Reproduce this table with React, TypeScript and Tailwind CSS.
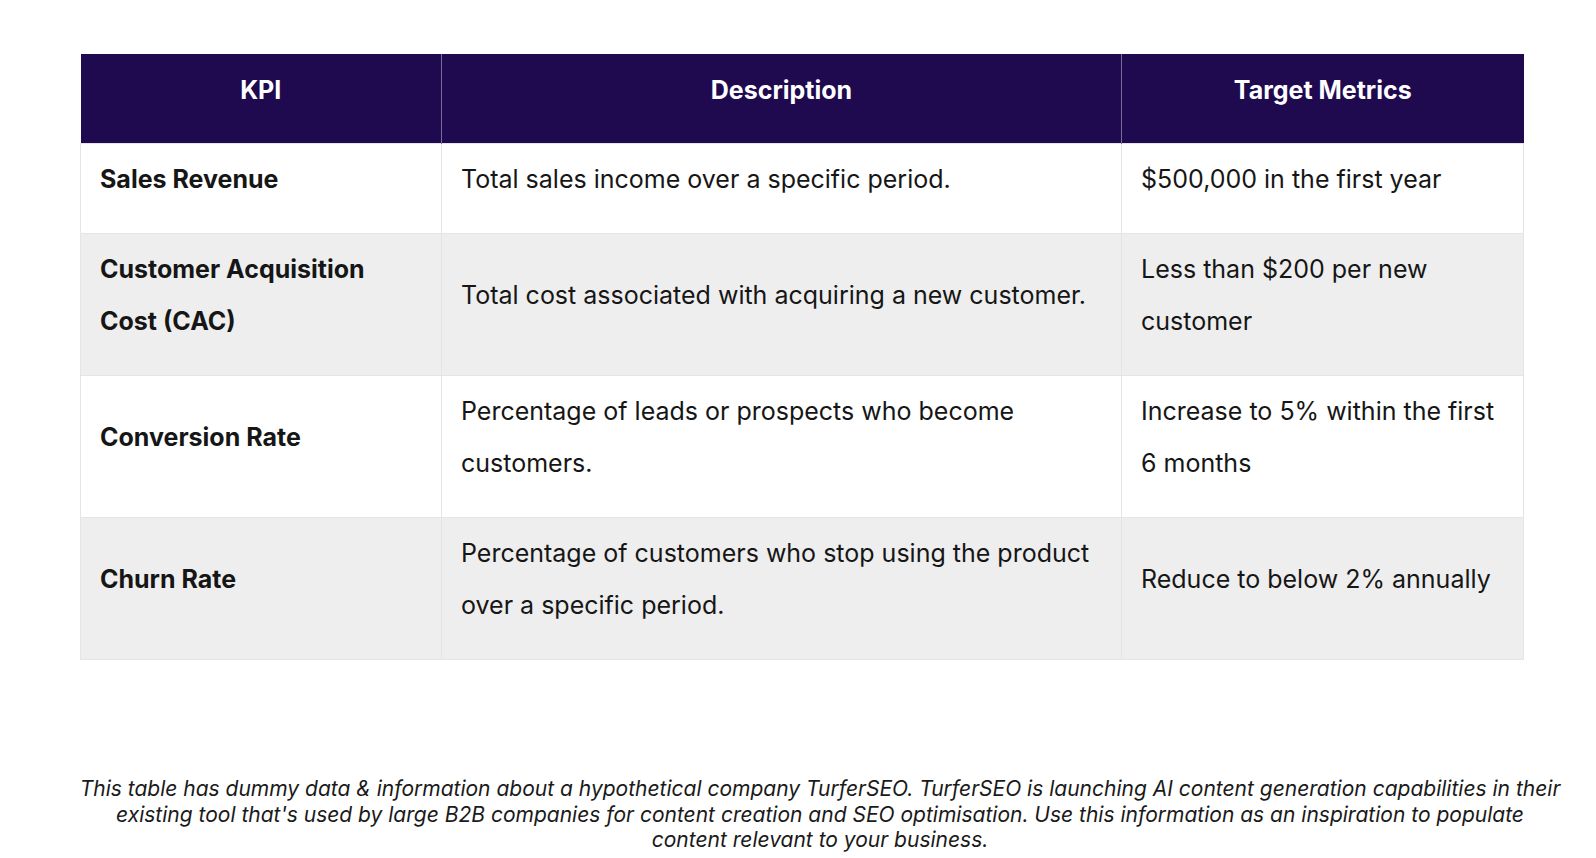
import React from "react";

const rows = [
  {
    kpi: "Sales Revenue",
    desc: "Total sales income over a specific period.",
    target: "$500,000 in the first year",
  },
  {
    kpi: "Customer Acquisition Cost (CAC)",
    desc: "Total cost associated with acquiring a new customer.",
    target: "Less than $200 per new customer",
  },
  {
    kpi: "Conversion Rate",
    desc: "Percentage of leads or prospects who become customers.",
    target: "Increase to 5% within the first 6 months",
  },
  {
    kpi: "Churn Rate",
    desc: "Percentage of customers who stop using the product over a specific period.",
    target: "Reduce to below 2% annually",
  },
];

export default function App() {
  return (
    <div className="min-h-[858px] bg-white font-['Inter','Liberation_Sans',sans-serif] text-[#161616]">
      <div className="pl-[80px] pt-[54px]">
        <table className="w-[1443px] table-fixed border-collapse text-[25px] leading-[52px]">
          <colgroup>
            <col className="w-[361px]" />
            <col className="w-[680px]" />
            <col className="w-[402px]" />
          </colgroup>
          <thead>
            <tr className="bg-[#200a4f] text-white">
              <th className="h-[89px] border-r border-[#7a6c98] px-5 pb-[27px] pt-[10px] text-center align-top font-bold">
                KPI
              </th>
              <th className="h-[89px] border-r border-[#7a6c98] px-5 pb-[27px] pt-[10px] text-center align-top font-bold">
                Description
              </th>
              <th className="h-[89px] px-5 pb-[27px] pt-[10px] text-center align-top font-bold">Target Metrics</th>
            </tr>
          </thead>
          <tbody>
            {rows.map((r, i) => (
              <tr key={r.kpi} className={i % 2 === 1 ? "bg-[#eeeeee]" : "bg-white"}>
                <td className="border border-[#e5e5e5] px-[19px] pb-[28px] pt-[9px] align-middle font-bold">
                  {r.kpi}
                </td>
                <td className="border border-[#e5e5e5] px-[19px] pb-[28px] pt-[9px] align-middle">{r.desc}</td>
                <td className="border border-[#e5e5e5] px-[19px] pb-[28px] pt-[9px] align-middle">{r.target}</td>
              </tr>
            ))}
          </tbody>
        </table>
      </div>
      <p className="ml-[40px] mt-[116px] w-[1560px] text-center text-[21px] italic leading-[25.5px] text-[#1a1a1a]">
        This table has dummy data &amp; information about a hypothetical company TurferSEO. TurferSEO is launching AI
        content generation capabilities in their
        <br />
        existing tool that's used by large B2B companies for content creation and SEO optimisation. Use this
        information as an inspiration to populate
        <br />
        content relevant to your business.
      </p>
    </div>
  );
}
